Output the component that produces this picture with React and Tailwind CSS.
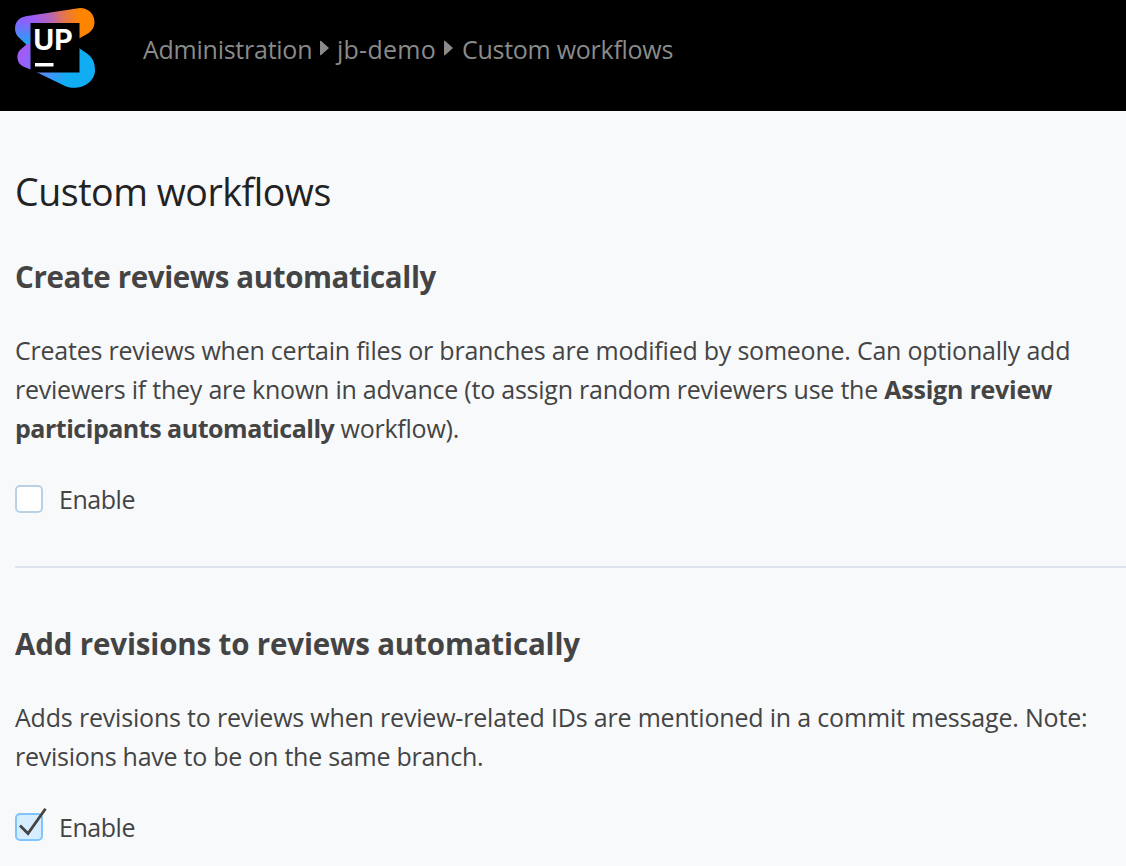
function Logo() {
  return (
    <svg className="block h-[80px] w-[80px] shrink-0" viewBox="15 8 80 80" aria-label="Upsource">
      <defs>
        <linearGradient id="top" gradientUnits="userSpaceOnUse" x1="20" y1="26" x2="90" y2="14">
          <stop offset="0" stopColor="#8465ff" />
          <stop offset="0.2" stopColor="#9a5cf5" />
          <stop offset="0.45" stopColor="#b765b5" />
          <stop offset="0.62" stopColor="#e27555" />
          <stop offset="0.85" stopColor="#ff8500" />
        </linearGradient>
        <linearGradient id="shade" gradientUnits="userSpaceOnUse" x1="24" y1="22" x2="26" y2="43">
          <stop offset="0" stopColor="#22a2f5" stopOpacity="0" />
          <stop offset="1" stopColor="#22a2f5" />
        </linearGradient>
        <linearGradient id="bottom" gradientUnits="userSpaceOnUse" x1="18" y1="50" x2="78" y2="78">
          <stop offset="0" stopColor="#a956f5" />
          <stop offset="0.25" stopColor="#8b68fa" />
          <stop offset="0.62" stopColor="#3c98f7" />
          <stop offset="0.85" stopColor="#10adf3" />
        </linearGradient>
      </defs>
      <path fill="url(#bottom)" d="M27 44L20 50C17 53 16.500 59 19 63C21 66 26 68 31 69.500L66 86.500C78 91 95 84 95 70C95 62 92 57 87 53.500L79 48V40H31Z" />
      <path fill="url(#top)" d="M27 45L18.500 37C14.500 33 14 26 17 21.500C20 17.500 23 16.500 29 15.700L80 8C89 8 94.500 14.500 94.500 22C94.500 27 92 31 88 33.500L79 38.500L31 42Z" />
      <path fill="url(#shade)" d="M27 45L18.500 37C14.500 33 14 26 17 21.500L31 21.500V42Z" />
      <path d="M30.500 23H79.500V72.500H30.500Z" />
      <text x="33.200" y="50.200" textLength="39.500" lengthAdjust="spacingAndGlyphs" fill="#fff" className="font-['Inter',sans-serif] text-[28px] font-bold">UP</text>
      <path fill="#fff" d="M35 63h18.500v3.500H35z" />
    </svg>
  );
}

function Separator({ className }) {
  return (
    <svg className={`block h-[16px] w-[9px] shrink-0 ${className}`} viewBox="0 0 9 16">
      <path fill="#8a8a8a" d="M0 1.500Q0 .3 1.200 1L8.500 7.400Q9.200 8 8.500 8.600L1.200 15Q0 15.700 0 14.500Z" />
    </svg>
  );
}

function Enable({ checked = false }) {
  return (
    <div className="flex h-[39px] items-center">
      <span className={`h-7 w-7 shrink-0 rounded-[5px] border-2 ${checked ? "border-[#7fc4ff] bg-[#d6edff]" : "border-[#b8d1e5] bg-white"}`}>
        {checked && (
          <svg className="-mt-[7px] block h-[30px] w-[32px]" viewBox="0 0 32 30">
            <path d="M3 17.500L11 25.500L28.500 0.800" fill="none" stroke="#444" strokeWidth="2.800" />
          </svg>
        )}
      </span>
      <span className="ml-4 pt-[3px] text-[25px] tracking-[-0.450px]">Enable</span>
    </div>
  );
}

export default function App() {
  return (
    <div className="flex h-[866px] w-[1126px] flex-col overflow-hidden bg-[#f8f9fb] font-['Open_Sans',sans-serif] text-[#444]">
      <header className="flex h-[111px] shrink-0 bg-black px-[15px] pt-2">
        <Logo />
        <nav className="ml-12 flex h-[84px] items-center whitespace-nowrap text-[25px] text-[#8a8a8a]">
          <span className="w-[177px] tracking-[-0.250px]">Administration</span>
          <Separator className="mb-1" />
          <span className="ml-2 w-[107px] tracking-[0.250px]">jb-demo</span>
          <Separator className="mb-1" />
          <span className="ml-[9px] tracking-[-0.270px]">Custom workflows</span>
        </nav>
      </header>
      <main className="flex flex-col whitespace-nowrap pl-[15px]">
        <h1 className="mt-[55px] h-[52px] text-[37.500px] leading-[52px] font-normal tracking-[-0.450px] text-[#222]">Custom workflows</h1>
        <h2 className="mt-[39px] h-10 text-[29.500px] leading-10 font-bold tracking-[-0.380px]">Create reviews automatically</h2>
        <p className="mt-[34px] text-[25px] leading-[39px]">
          <span className="block tracking-[-0.230px]">Creates reviews when certain files or branches are modified by someone. Can optionally add</span>
          <span className="block tracking-[-0.235px]">reviewers if they are known in advance (to assign random reviewers use the <b>Assign review</b></span>
          <span className="block tracking-[-0.240px]"><b className="tracking-[-0.480px]">participants automatically</b> workflow).</span>
        </p>
        <div className="mt-[31px]"><Enable /></div>
        <hr className="mt-[48px] border-t-2 border-[#dce3ea]" />
        <h2 className="mt-[56px] h-10 text-[29.500px] leading-10 font-bold tracking-[-0.150px]">Add revisions to reviews automatically</h2>
        <p className="mt-[34px] text-[25px] leading-[39px]">
          <span className="block tracking-[-0.185px]">Adds revisions to reviews when review-related IDs are mentioned in a commit message. Note:</span>
          <span className="block tracking-[-0.250px]">revisions have to be on the same branch.</span>
        </p>
        <div className="mt-[31px]"><Enable checked /></div>
      </main>
    </div>
  );
}
